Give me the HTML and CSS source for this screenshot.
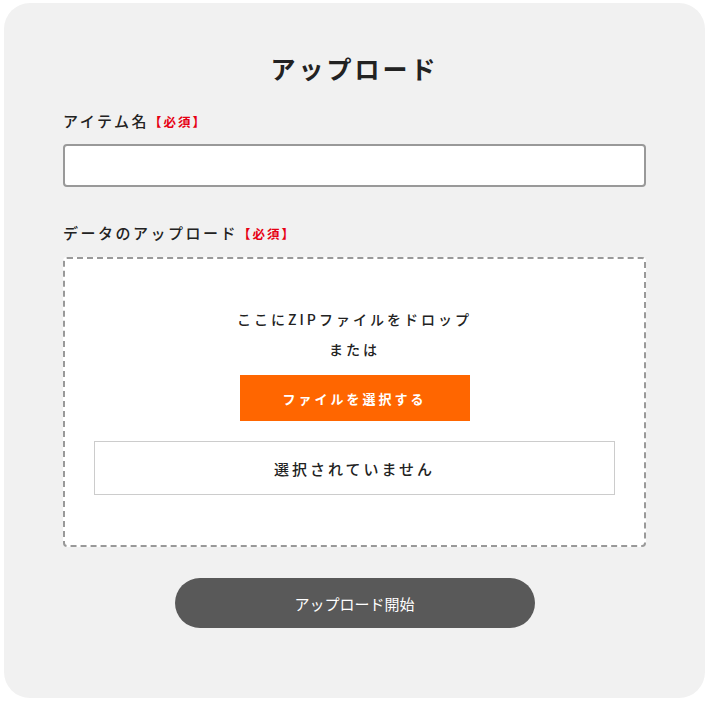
FILE: index.html
```html
<!DOCTYPE html>
<html lang="ja">
<head>
    <meta charset="UTF-8">
    <meta name="viewport" content="width=device-width, initial-scale=1.0">
    <title>アップロード</title>
    <link rel="stylesheet" href="styles.css">
</head>
<body>
    <main class="card">
        <h1>アップロード</h1>

        <div class="field">
            <label class="label" for="item-name">アイテム名<span class="req">【必須】</span></label>
            <input type="text" id="item-name" class="text-input">
        </div>

        <div class="field upload-field">
            <p class="label">データのアップロード<span class="req">【必須】</span></p>
            <div class="dropzone">
                <p class="drop-text">ここにZIPファイルをドロップ</p>
                <p class="drop-or">または</p>
                <button type="button" class="pick-btn">ファイルを選択する</button>
                <div class="file-name">選択されていません</div>
            </div>
        </div>

        <div class="actions">
            <button type="button" class="submit-btn">アップロード開始</button>
        </div>
    </main>
</body>
</html>
```

FILE: styles.css
```css
body {
    margin: 0;
    background: #fff;
    font-family: "Noto Sans CJK JP", "Noto Sans", sans-serif;
    color: #222;
}

.card {
    width: 701px;
    height: 695px;
    box-sizing: border-box;
    margin: 3px 4px;
    padding: 46px 59px 0;
    background: #f1f1f1;
    border-radius: 26px;
}

h1 {
    margin: 0 0 22px;
    text-align: center;
    font-size: 25px;
    font-weight: bold;
    letter-spacing: 3px;
    line-height: 38px;
}

.label {
    display: block;
    margin: 0 0 10px;
    font-size: 15px;
    font-weight: 500;
    letter-spacing: 2.5px;
    line-height: 24px;
}

.req {
    color: #e60012;
    font-size: 12.5px;
    font-weight: bold;
    letter-spacing: 2px;
}

.text-input {
    display: block;
    width: 100%;
    height: 43px;
    box-sizing: border-box;
    border: 2px solid #999;
    border-radius: 4px;
    background: #fff;
}

.upload-field {
    margin-top: 34px;
}

.upload-field .label {
    margin-bottom: 11px;
}

.dropzone {
    display: flex;
    flex-direction: column;
    align-items: center;
    height: 290px;
    box-sizing: border-box;
    padding: 45px 29px 0;
    border: 2px dashed #999;
    border-radius: 4px;
    background: #fff;
}

.drop-text,
.drop-or {
    margin: 0;
    font-size: 14px;
    font-weight: 500;
    letter-spacing: 3px;
    line-height: 30px;
}

.pick-btn {
    width: 230px;
    height: 46px;
    margin-top: 11px;
    border: none;
    background: #ff6600;
    color: #fff;
    font-family: inherit;
    font-size: 13px;
    font-weight: bold;
    letter-spacing: 3px;
    cursor: pointer;
}

.file-name {
    width: 100%;
    height: 54px;
    box-sizing: border-box;
    margin-top: 20px;
    border: 1px solid #ccc;
    display: flex;
    align-items: center;
    justify-content: center;
    font-size: 15px;
    font-weight: 500;
    letter-spacing: 3px;
}

.actions {
    display: flex;
    justify-content: center;
    margin-top: 31px;
}

.submit-btn {
    width: 360px;
    height: 50px;
    border: none;
    border-radius: 25px;
    background: #595959;
    color: #fff;
    font-family: inherit;
    font-size: 15px;
    cursor: pointer;
}
```
